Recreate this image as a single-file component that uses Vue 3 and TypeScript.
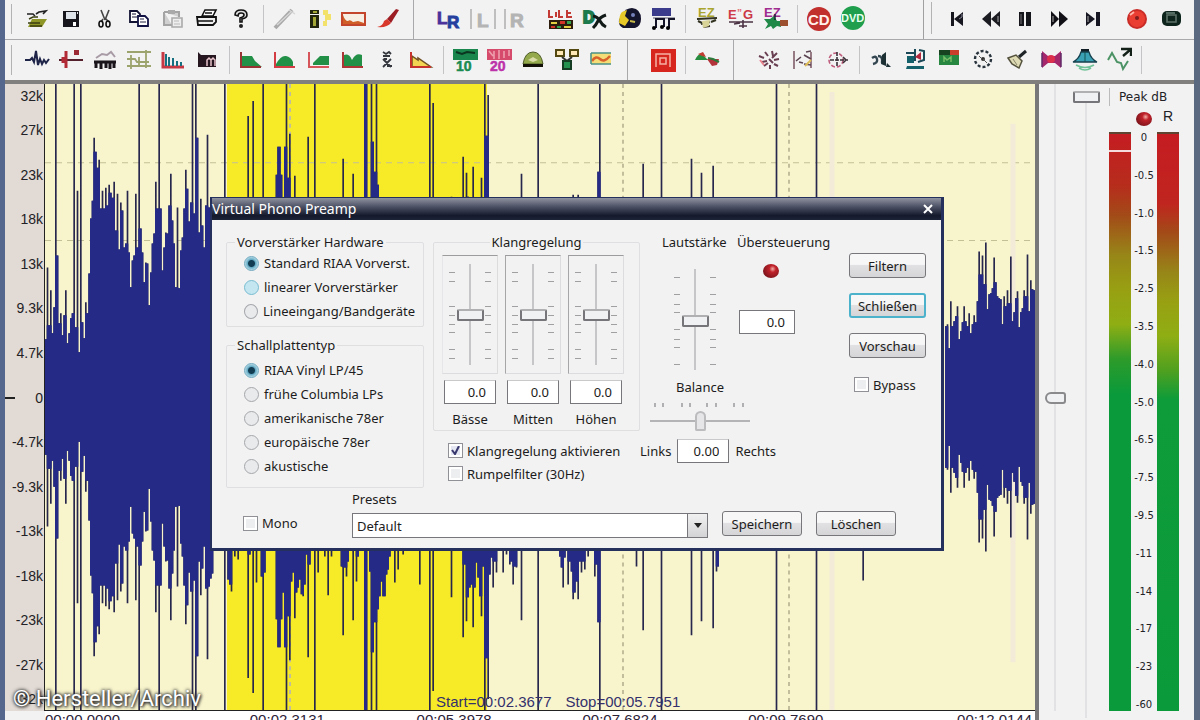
<script setup lang="ts">
import { ref } from 'vue'

type Tool = { name: string; art: string }

const sans = 'font-family="Liberation Sans, sans-serif" font-weight="bold"'

const fileTools: Tool[] = [
  { name: 'Öffnen', art: '<path d="M3 8h6l2 2M12 8l3-2 7-1-3 3" fill="none" stroke="#222" stroke-width="1.6"/><path d="M8 13h15l-5 8H4z" fill="#8f9628"/><path d="M5 13l4-2h5M4 17h12M6 20h12" fill="none" stroke="#3b3f10" stroke-width="1.4"/>' },
  { name: 'Sichern', art: '<path d="M5 5h16v16H5z" fill="#16161c"/><path d="M8 6h10v7H8z" fill="#dfe3ea"/><path d="M15 16h3v4h-3z" fill="#fff"/><path d="M19 6h1v2h-1z" fill="#ddd"/>' },
  { name: 'Ausschneiden', art: '<path d="M9 4l4 10M17 4l-4 10M11 13l-2 3M14 13l3 3" stroke="#444" stroke-width="1.6"/><ellipse cx="9" cy="18" rx="2" ry="3" fill="none" stroke="#111" stroke-width="1.6"/><ellipse cx="16" cy="18" rx="2" ry="3" fill="none" stroke="#111" stroke-width="1.6"/>' },
  { name: 'Kopieren', art: '<path d="M4 5h7l3 3v8H4z" fill="#fff" stroke="#111133" stroke-width="1.8"/><path d="M6 8h4M6 11h6" stroke="#113"/><path d="M12 10h7l3 3v7H12z" fill="#fff" stroke="#111144" stroke-width="1.8"/><path d="M14 13h4M14 16h6" stroke="#224"/>' },
  { name: 'Einfügen', art: '<path d="M4 6h15v5M4 6v13h8" fill="#d0d0d0" stroke="#a4a4a4" stroke-width="2"/><path d="M8 4h7v4H8z" fill="#aaa"/><path d="M12 12h10v9H12z" fill="#eee" stroke="#aaa" stroke-width="1.6"/><path d="M14 15h5M14 18h6" stroke="#bbb"/>' },
  { name: 'Drucken', art: '<path d="M8 10l3-6h11l-3 6z" fill="#fff" stroke="#111" stroke-width="1.6"/><path d="M3 11h19v5l-3 3H4z" fill="#eee" stroke="#111" stroke-width="1.8"/><path d="M4 15h15M11 7h7" stroke="#111" stroke-width="1.4"/>' },
  { name: 'Hilfe', art: '<path d="M7 9q0-5 6-5t6 5q0 3-5 4v3h-2v-4q4-1 4-3t-3-2-3 3z" fill="#ddd" stroke="#111" stroke-width="1.6"/><circle cx="13" cy="20" r="2" fill="#222"/>' }
]
const editTools: Tool[] = [
  { name: 'Stift', art: '<path d="M3 22L20 4" stroke="#a9a9a9" stroke-width="4"/><path d="M5 19L19 6M17 4l6 4" stroke="#d6d6d6" stroke-width="1.5"/>' },
  { name: 'Pegelanzeige', art: '<path d="M4 4h9v4H4zM4 9h9v13H4z" fill="#22260e"/><path d="M7 5h4v2H7zM7 11h3v9H7z" fill="#a4a836"/><path d="M17 4h5v4h3v6h-4v6h-4v-5h2V9h-2z" fill="#f2e26b"/>' },
  { name: 'Hüllkurve', art: '<rect x="2" y="7" width="23" height="12" fill="#f8efe4" stroke="#c2452c" stroke-width="2"/><path d="M3 18V9q2 6 5 6 2-2 5 1l5-1 6 2v1z" fill="#cf5e28"/>' },
  { name: 'Pinsel', art: '<path d="M25 4l-3-1-9 10 4 4z" fill="#9d1d24"/><path d="M13 13l4 4q-4 5-14 4 6-1 7-6z" fill="#d8382a"/>' }
]
const channelTools: Tool[] = [
  { name: 'Beide Kanäle', art: `<text x="1" y="18" font-size="17" fill="#4b2f9b" stroke="#4b2f9b" ${sans}>L</text><text x="11" y="22" font-size="17" fill="#243f9e" stroke="#243f9e" ${sans}>R</text>` },
  { name: 'Linker Kanal', art: `<path d="M1 3v20M25 3v20" stroke="#aaa" stroke-width="1.4"/><text x="7" y="21" font-size="19" fill="#b4b4b4" stroke="#b4b4b4" ${sans}>L</text>` },
  { name: 'Rechter Kanal', art: `<path d="M1 3v20" stroke="#aaa" stroke-width="1.4"/><text x="6" y="21" font-size="19" fill="#b4b4b4" stroke="#b4b4b4" ${sans}>R</text>` }
]
const pluginTools: Tool[] = [
  { name: 'Filterliste', art: '<path d="M1 4v7h4M8 6v5M11 4v7h4M19 4v7h5M19 7h4" fill="none" stroke="#c33a35" stroke-width="2"/><path d="M1 14h24v9H1z" fill="#2c1d0d"/><path d="M3 16h6v2H3zM16 20h7v2h-7z" fill="#e4cf41"/><path d="M12 15h5v3h-5zM3 20h4v2H3z" fill="#d33326"/><path d="M19 15h4v3h-4zM9 20h4v2H9z" fill="#35a34e"/>' },
  { name: 'DirectX', art: `<text x="1" y="17" font-size="16" fill="#1d7a4c" stroke="#1d7a4c" stroke-width="2" ${sans}>D</text><path d="M11 10q5 1 7 5t6 6M24 9q-6 2-8 6t-5 7" fill="none" stroke="#111a16" stroke-width="3"/>` },
  { name: 'VST', art: '<path d="M6 8q4-6 10-6 9 1 9 11 0 7-6 9H7q-5-3-4-8z" fill="#15142d"/><path d="M6 6l5-2-2 6 4 4-4 6-6-3q0-8 3-11z" fill="#e8c92a"/><circle cx="17" cy="9" r="2" fill="#7480b9"/><path d="M14 15l5 1" stroke="#c7b948" stroke-width="2"/>' },
  { name: 'Medien', art: '<path d="M2 2h19v8H2z" fill="#3b3d8c"/><path d="M3 12h22" stroke="#889" stroke-width="1.5"/><path d="M6 22v-9h8v8M19 22v-9h6" fill="none" stroke="#151529" stroke-width="2"/><circle cx="4" cy="22" r="2"/><circle cx="12" cy="21" r="2"/><circle cx="18" cy="22" r="2"/>' }
]
const easyTools: Tool[] = [
  { name: 'EZ Clean', art: `<text x="4" y="11" font-size="13" fill="#aaa52f" ${sans}>EZ</text><path d="M3 13l20-1M4 15l4 2M17 16l5-2M7 18l9-2M9 21l7-1" stroke="#332" stroke-width="2"/><path d="M8 15l8-1-1 6-6 2z" fill="#d8d397"/>` },
  { name: 'EZ Forensik', art: `<text x="0" y="13" font-size="13" fill="#d03c48" ${sans}>E</text><text x="9" y="11" font-size="10" fill="#e2737a" ${sans}>”</text><text x="15" y="13" font-size="13" fill="#cb3744" ${sans}>G</text><path d="M1 16h24M6 18l6-1M11 20h8M15 14v8" stroke="#4b3344" stroke-width="1.6"/>` },
  { name: 'EZ Enhance', art: `<text x="2" y="11" font-size="13" fill="#a02c8f" ${sans}>EZ</text><path d="M2 13h6l4-3 3 5h4v6l-4-1-4 3-2-3-6 3 3-5z" fill="#218948"/><path d="M18 14h8v6h-8z" fill="#9c5030"/><path d="M13 8v6" stroke="#123" stroke-width="1.4"/>` }
]
const burnTools: Tool[] = [
  { name: 'CD brennen', art: `<circle cx="13" cy="13" r="12" fill="#c2302d"/><text x="2" y="19" font-size="15" fill="#fff0ec" ${sans}>CD</text>` },
  { name: 'DVD brennen', art: `<circle cx="13" cy="12" r="12" fill="#1f9f4d"/><text x="1" y="16" font-size="11" fill="#e9fff0" ${sans}>DVD</text>` }
]
const playTools: Tool[] = [
  { name: 'Zum Anfang', art: '<path d="M7 6h3v14H7zM19 6v14l-9-7z" fill="#171720"/><path d="M18 8v3l-3 2" stroke="#889" fill="none"/>' },
  { name: 'Zurück', art: '<path d="M13 5v16l-9-8zM22 5v16l-9-8z" fill="#1b1b22"/><path d="M20 10v6" stroke="#aaa"/>' },
  { name: 'Pause', art: '<path d="M7 6h5v14H7zM14 6h5v14h-5z" fill="#15151c"/><path d="M9 8v10" stroke="#777"/>' },
  { name: 'Vor', art: '<path d="M5 5v16l8-8zM13 5v16l9-8z" fill="#101016"/><path d="M7 10v6" stroke="#aaa"/>' },
  { name: 'Zum Ende', art: '<path d="M6 6v14l9-7zM16 6h4v14h-4z" fill="#171723"/><path d="M8 10v6" stroke="#aaa"/>' }
]
const recordTools: Tool[] = [
  { name: 'Aufnahme', art: '<circle cx="13" cy="13" r="10" fill="#c92c27"/><circle cx="13" cy="13" r="8" fill="#ea3e33"/><circle cx="13" cy="12" r="2" fill="#7d1d1d"/><path d="M6 9l4-3" stroke="#ffb6a8" stroke-width="2"/>' },
  { name: 'Stopp', art: '<rect x="4" y="5" width="19" height="15" rx="5" fill="#0c241c"/><path d="M9 9h9v7H9z" fill="none" stroke="#5d7168" stroke-width="1.6"/><path d="M8 7h9" stroke="#9ab3a8"/>' }
]

const axes = (color: string) => `<path d="M3 5v15h20" fill="none" stroke="${color}" stroke-width="2"/>`
const restoreTools: Tool[] = [
  { name: 'Klickfilter', art: '<path d="M1 13h5l2-2 2 4 2-11 2 14 2-6 2 5 2-4 2 3 3-4" fill="none" stroke="#1e2448" stroke-width="2"/>' },
  { name: 'Klick entfernen', art: '<path d="M1 13h24" stroke="#54202c" stroke-width="2"/><path d="M8 4v17M5 10v6" stroke="#b12a35" stroke-width="3"/><path d="M16 3h5v5h-5z" fill="#9c2a35"/>' },
  { name: 'Rauschfilter', art: '<path d="M4 11l6-4 5 1 4-3 4 5" fill="none" stroke="#a99ba5" stroke-width="2"/><path d="M2 15h22M4 21v-5M9 22v-6M14 21v-5M18 22v-6M22 21v-5" stroke="#19151b" stroke-width="3"/>' },
  { name: 'Brummfilter', art: '<path d="M1 5h24M5 8v14M13 10v10M20 3v18M1 12h8l2 3h12M1 19h24" fill="none" stroke="#9da36d" stroke-width="1.8"/>' },
  { name: 'Spektrumfilter', art: '<path d="M3 5v15h21" fill="none" stroke="#c63944" stroke-width="3"/><path d="M6 19V7M9 19V10M13 19V11M17 19V14M21 19v-4" stroke="#167080" stroke-width="2"/>' },
  { name: 'Kontinuierlich', art: '<path d="M4 5l3 3h15v12H4z" fill="#251620"/><path d="M13 19v-6l2-2 2 2v6M17 13l2-2 2 2v6" fill="none" stroke="#e7c4cc" stroke-width="1.5"/>' }
]
const filterTools: Tool[] = [
  { name: 'Tiefpass', art: '<path d="M4 9h10l3 5 7 6H4z" fill="#239048"/>' + axes('#993333') },
  { name: 'Bandpass', art: '<path d="M4 17q5-9 10-8t7 6v5H4z" fill="#239048"/>' + axes('#d23c42') },
  { name: 'Hochpass', art: '<path d="M7 16l7-7h9v9H7z" fill="#239048"/>' + axes('#d5555a') },
  { name: 'Kerbfilter', art: '<path d="M4 8q5-2 8 5 4-8 10-5v12H4z" fill="#239048"/>' + axes('#ad3535') },
  { name: 'Median', art: '<path d="M9 5l3 2 3-2 2 2M9 9h7M9 12l8 8M17 12l-8 8M10 12h3M13 19h5" stroke="#33363d" stroke-width="1.8" fill="none"/>' },
  { name: 'Equalizer', art: '<path d="M4 9l6 4v-2l13 9H4z" fill="#f2d553" stroke="#6f5023" stroke-width="1.5"/>' + axes('#c8322c') }
]
const eqTools: Tool[] = [
  { name: '10-Band Equalizer', art: `<path d="M1 2h25v11H1z" fill="#19874d"/><path d="M4 5l6 2 5-2 8 1" stroke="#0b3520" stroke-width="2" fill="none"/><text x="4" y="24" font-size="14" fill="#1a8b50" stroke="#1a8b50" stroke-width=".5" ${sans}>10</text>` },
  { name: '20-Band Equalizer', art: `<path d="M1 2h25v11H1z" fill="#d64b6c"/><path d="M3 4l4 5M8 4v8M13 3v9M18 4v7M23 3v6" stroke="#ee9fae" stroke-width="1.6"/><text x="4" y="24" font-size="14" fill="#bd33a9" stroke="#bd33a9" stroke-width=".5" ${sans}>20</text>` },
  { name: 'Dynamik', art: '<path d="M3 17q2-12 10-12t10 12z" fill="#93a94c" stroke="#4f5d27"/><path d="M8 13l5-3 5 3-5 2z" fill="#dadca7"/><path d="M3 17h20v3H3z" fill="#131008"/>' },
  { name: 'Kette', art: '<path d="M2 3h8v6H2zM16 3h8v6h-8z" fill="#ffe8b5" stroke="#544811" stroke-width="2"/><path d="M8 10l5 4 5-4" fill="none" stroke="#333" stroke-width="2"/><path d="M9 14h8v8H9z" fill="#22924e" stroke="#143d24" stroke-width="2"/>' },
  { name: 'Verlauf', art: '<path d="M3 6h20v11H3z" fill="#f4dd77"/><path d="M4 14q4-6 8-2t10-3" fill="none" stroke="#d8622b" stroke-width="2.5"/><path d="M3 6h20M3 17h20M3 6v11" stroke="#4b9188" stroke-width="1.6"/>' }
]
const stopTool: Tool[] = [
  { name: 'Bypass', art: '<rect x="1" y="2" width="25" height="23" fill="#d6261d"/><path d="M6 20V7h14v13M10 17v-6h6v6z" fill="none" stroke="#f6b0a2" stroke-width="1.5"/>' }
]
const morphTool: Tool[] = [
  { name: 'Überblenden', art: '<path d="M1 13q5-10 10-3l3 3H1z" fill="#278c3e"/><path d="M4 7l5-2 3 5-4-1z" fill="#c23c31"/><path d="M13 12h12l-2 6-5 1z" fill="#b3343a"/><path d="M14 11l5 1 6 3" stroke="#2c7c3c" stroke-width="2"/>' }
]
const sparkTools: Tool[] = [
  { name: 'Knistern', art: '<path d="M3 9l5 2M9 5l3 4M16 4l1 5M21 6l-5 5M23 12l-5 1M6 15l5-1M13 12l4 4M18 17l4 2M8 19l4-3M14 18v4" stroke="#683e50" stroke-width="2"/><path d="M4 13l4 5" stroke="#e8828c" stroke-width="2"/>' },
  { name: 'Ausrichten', art: '<path d="M4 4v18M21 5v16" stroke="#967b84" stroke-width="2"/><path d="M6 14l5-4M14 8l7 4M14 17l7 1M9 15l4 1M16 5l5-1" stroke="#5c4452" stroke-width="1.6"/><path d="M15 19l6-6" stroke="#ddbb57" stroke-width="2"/>' },
  { name: 'Zielen', art: '<circle cx="12" cy="13" r="7" fill="none" stroke="#c05d7c" stroke-width="1.6" stroke-dasharray="4 2"/><path d="M13 5v15M6 13h18M19 10l3 3-3 3" fill="none" stroke="#3a3037" stroke-width="1.6" stroke-dasharray="4 1"/>' }
]
const effectTools: Tool[] = [
  { name: 'Echo', art: '<path d="M4 11q4-3 5 1t-4 5M10 9q5 0 4 7" fill="none" stroke="#344751" stroke-width="2.4"/><path d="M14 8l4-3v14l-5-2zM19 16l4 4h-5z" fill="#1d3135"/>' },
  { name: 'Hall', art: '<path d="M4 6h10M13 2v12M17 3l5 1v9l-6 2" fill="none" stroke="#1b4958" stroke-width="2"/><path d="M5 9h7v7H5zM5 19h17v3H4z" fill="#15616b"/><path d="M13 10l6-5v8z" fill="#b4283d"/>' },
  { name: 'Pegel', art: '<path d="M3 3h20v15H3z" fill="#278741"/><path d="M3 3h11v5H3z" fill="#184321"/><path d="M14 3h9v5h-9z" fill="#c93d2b"/><path d="M8 15v-5l3 3 4-3v5" fill="none" stroke="#75bd67" stroke-width="1.5"/>' },
  { name: 'Tempo', art: '<circle cx="13" cy="12" r="8" fill="none" stroke="#29343d" stroke-width="2.4" stroke-dasharray="3 2"/><circle cx="13" cy="12" r="2" fill="#333"/><path d="M13 12l4 4M9 9l2 2" stroke="#555"/>' },
  { name: 'Besen', art: '<path d="M22 4l-7 6" stroke="#1f2427" stroke-width="3"/><path d="M4 11l8-3 6 6-3 7-7-4z" fill="#dedbb4" stroke="#55533e" stroke-width="1.5"/><path d="M9 12l4 6" stroke="#88856b"/>' },
  { name: 'Stereo', art: '<path d="M4 4l6 5h7l6-5v17l-6-5h-7l-6 5z" fill="#a4276c"/><circle cx="13" cy="12" r="4" fill="#dc304c"/><path d="M4 6v14M23 6v14" stroke="#622b68" stroke-width="1.5"/>' },
  { name: 'Glocke', art: '<path d="M9 2h8v4H9z" fill="#101d24"/><path d="M1 15q6-3 8-10h8q2 7 8 10z" fill="#3aa0b4" stroke="#17414d" stroke-width="1.3"/><path d="M13 5v10" stroke="#155"/><path d="M4 18q9 5 18 0M7 21q6 4 12 0" fill="none" stroke="#73c39a" stroke-width="1.6"/>' },
  { name: 'Resampling', art: '<path d="M2 13l4-7 5 9 4 1 2 6 5-8" fill="none" stroke="#4b9264" stroke-width="2"/><path d="M15 2h10v7M24 3l-7 6" fill="none" stroke="#132018" stroke-width="2.4"/>' }
]

/* Peak amplitudes measured from the centre line; full scale is 314. */
const FULL = 320
const HALF = 314
const STEP = 5 / 3
const intro = [
  58, 130, 72, 107, 64, 90, FULL, 142, 74, 84, 62, 82, 107, 54, 64, 79, 84, FULL, 70, 207, 45, FULL, 75, 59, 95, 84,
  124, 179, 197, 260, 246, 230, 238, 189, 207, 189, 210, 192, 213, 205, 200, 216, 167, 204, 148, 195, 187, 150, 154,
  207, 145, 110, 137, 142, 204, 150, FULL, 169, 145, 115, 135, 134, 92, 125, 154, 164, 216, 189, FULL, 189, 127, 150,
  165, 164, 192, 224, 177, 154, 110, 190, 109, 147, 160, 189, 228, 209, 176, 195, FULL, 184, FULL, 260, 165, 199, 172,
  150, 192, 263, 190, 182, 177
]
const outro = [
  71, 73, 49, 96, 71, 76, 81, 91, 58, 66, 75, 91, 76, 71, 84, 64, 73, 82, 75, 96, 146, 123, 142, 113, 155, 88, 103,
  104, 109, 140, 115, 101, 99, 98, 73, 101, 91, 107, 94, 141, 76, 85, 99, 106, 70, 85, 89, 107, 101, 143, 86, 117, 108, 107
]
/* [slot, amplitude] for the sparse passage between both loud parts */
const middle: [number, number][] = [
  [3, FULL], [5, 183], [6, 188], [7, 195], [9, 160], [11, 163], [17, 282], [18, 158], [20, 297], [22, 186], [25, 180],
  [26, FULL], [27, 176], [34, 223], [35, 251], [36, 251], [37, 223], [38, 196], [39, 251], [40, FULL], [41, 220],
  [42, 264], [43, 185], [44, 176], [45, 222], [46, 196], [47, 191], [48, 183], [49, 198], [50, 200], [51, 188],
  [52, 158], [53, 261], [54, 168], [57, FULL], [59, 176], [63, 160], [65, 199], [67, 160], [73, 170], [74, 239],
  [75, 171], [76, 180], [77, 165], [80, 224], [82, 185], [83, 160], [87, FULL], [88, FULL], [90, 175], [91, FULL],
  [92, 256], [93, 226], [94, FULL], [95, 213], [96, 200], [97, 185], [98, 200], [99, 200], [100, 178], [101, 173],
  [102, 160], [105, 186], [107, 173], [110, 158], [120, 188], [126, FULL], [128, 295], [139, 201], [146, 241],
  [147, 168], [148, 225], [149, 201], [150, 191], [151, 188], [152, 231], [153, 191], [154, 166], [155, 181],
  [156, 200], [157, 220], [158, 170], [159, FULL], [160, 262], [161, 303], [162, 178], [163, 161], [164, 191],
  [165, 165], [166, 176], [170, 176], [172, 158], [174, 168], [175, 165], [176, 188], [177, 170], [178, 171],
  [181, 224], [191, FULL], [204, 160], [205, 171], [206, 191], [207, 161], [209, 188], [210, 165], [211, 175],
  [212, 203], [213, 196], [214, 185], [215, 203], [216, 165], [217, 176], [218, 165], [219, 173], [221, 160],
  [225, 180], [226, 168], [227, 226], [228, FULL], [250, 170], [254, 234], [265, FULL], [283, 239], [289, 225],
  [296, 232], [298, 175], [299, 170], [334, FULL], [358, FULL], [386, 184]
]

function slots(list: [number, number][], count: number): number[] {
  const out: number[] = new Array(count).fill(0)
  list.forEach(([slot, amp]) => { out[slot] = amp })
  return out
}
function bars(amps: number[], start: number): string {
  return amps
    .map((amp, i) => (amp ? `M${(start + i * STEP).toFixed(2)} ${HALF - amp}h${STEP.toFixed(2)}v${amp * 2}h-${STEP.toFixed(2)}z` : ''))
    .join('')
}
/* The solid body stops where a peak rises above both of its neighbours. */
function body(amps: number[]): number[] {
  return amps.map((amp, i) => Math.min(amp, Math.max(amps[i - 1] ?? 0, amps[i + 1] ?? 0)))
}
const middleAmps = slots(middle, 388)
const peakPath = bars(intro, 0) + bars(middleAmps, 174) + bars(outro, 900)
const bodyPath = bars(body(intro), 0) + bars(body(middleAmps), 174) + bars(body(outro), 900)

const scale = ['32k', '27k', '23k', '18k', '13k', '9.3k', '4.7k', '0', '-4.7k', '-9.3k', '-13k', '-18k', '-23k', '-27k', '-32k']
const times = ['00:00.0000', '00:02.3131', '00:05.3978', '00:07.6824', '00:09.7690', '00:12.0144']
const decibels = ['0', '-0.5', '-1.0', '-1.5', '-2.5', '-3.5', '-4.0', '-5.0', '-6.5', '-7.5', '-9.5', '-11', '-14', '-17', '-23', '-60']
const toneTicks = [8, 17, 42, 51, 60, 68, 85, 94]
const volumeTicks = [8, 25, 35, 43, 60, 70, 78, 95]
const panTicks = [4, 12, 31, 39, 56, 65, 83, 92]
const ticks = (list: number[]) => list.map((y) => `M0 ${y}h6v1h-6z`).join('')
const panPath = panTicks.map((x) => `M${x} 0h2v4h-2z`).join('')

const hardware = ['Standard RIAA Vorverst.', 'linearer Vorverstärker', 'Lineeingang/Bandgeräte']
const records = ['RIAA Vinyl LP/45', 'frühe Columbia LPs', 'amerikanische 78er', 'europäische 78er', 'akustische']
const chosenHardware = ref(hardware[0])
const chosenRecord = ref(records[0])
const tones = ref([
  { name: 'Bässe', level: 50, value: '0.0' },
  { name: 'Mitten', level: 50, value: '0.0' },
  { name: 'Höhen', level: 50, value: '0.0' }
])
const toneActive = ref(true)
const rumble = ref(false)
const bypass = ref(false)
const mono = ref(false)

const fileRow = [
  { tools: fileTools, gap: 'line' },
  { tools: editTools, gap: 'wide' },
  { tools: channelTools, gap: 'none' },
  { tools: pluginTools, gap: 'line' },
  { tools: easyTools, gap: 'line' },
  { tools: burnTools, gap: 'dock' },
  { tools: playTools, gap: 'none' },
  { tools: recordTools, gap: '' }
]
const effectRow = [
  { tools: restoreTools, gap: 'line' },
  { tools: filterTools, gap: 'line' },
  { tools: eqTools, gap: 'wide' },
  { tools: stopTool, gap: 'line' },
  { tools: morphTool, gap: 'wide' },
  { tools: sparkTools, gap: 'line' },
  { tools: effectTools, gap: 'line' }
]
</script>

<template>
  <main class="app">
    <header class="bars">
      <div v-for="(row, r) in [fileRow, effectRow]" :key="r" class="toolbar" role="toolbar">
        <span class="grip"></span>
        <template v-for="(group, g) in row" :key="g">
          <div class="group">
            <button v-for="tool in group.tools" :key="tool.name" class="tool" type="button" :aria-label="tool.name">
              <svg viewBox="0 0 26 26" width="26" height="26" v-html="tool.art"></svg>
            </button>
          </div>
          <span v-if="group.gap" class="gap" :class="group.gap"></span>
        </template>
      </div>
    </header>

    <div class="stage">
      <div class="scale">
        <span v-for="mark in scale" :key="mark" :class="{ zero: mark === '0' }">{{ mark }}</span>
      </div>

      <section class="wave">
        <div class="plot">
          <svg class="trace" viewBox="0 0 990 628" preserveAspectRatio="none" aria-hidden="true">
            <rect width="990" height="628" fill="#f8f5cd" />
            <rect x="182" width="260" height="628" fill="#f7ea26" />
            <path d="M0 79H990M0 157H990" stroke="#c4c096" stroke-dasharray="6 5" />
            <path d="M245 0V628M578 0V628M744 0V628" stroke="#c2be9c" stroke-width="2" stroke-dasharray="4 4" />
            <path d="M787 8V628M968 40V580" stroke="#f3ebd8" stroke-width="5" />
            <path :d="peakPath" fill="#27264c" />
            <path :d="bodyPath" fill="#242a86" />
          </svg>
          <p class="range"><span>Start=00:02.3677</span><span>Stop=00:05.7951</span></p>
        </div>
        <div class="timeline"><span v-for="t in times" :key="t">{{ t }}</span></div>
      </section>

      <aside class="monitor">
        <input class="fader zoomer" type="range" value="50" aria-label="Vertikaler Zoom" />
        <input class="fader gain" type="range" value="100" aria-label="Ausgangspegel" />
        <div class="peaks">
          <p class="peak-title">Peak dB</p>
          <div class="peak-lamps"><span></span><i class="led"></i><b>R</b></div>
          <div class="meters">
            <div class="meter held"></div>
            <div class="decibels"><span v-for="d in decibels" :key="d">{{ d }}</span></div>
            <div class="meter"></div>
          </div>
        </div>
      </aside>

      <form class="dialog" role="dialog" aria-label="Virtual Phono Preamp" @submit.prevent>
        <div class="title">
          <span>Virtual Phono Preamp</span>
          <button type="button" class="close" aria-label="Fenster schließen">
            <svg viewBox="0 0 10 10" width="10" height="10"><path d="M1 1l8 8M9 1L1 9" stroke="#fff" stroke-width="2" /></svg>
          </button>
        </div>

        <div class="content">
          <div class="settings">
            <div class="choices">
              <fieldset class="hardware">
                <legend>Vorverstärker Hardware</legend>
                <label v-for="(item, i) in hardware" :key="item" class="option" :class="{ hot: i === 1 }">
                  <input v-model="chosenHardware" type="radio" name="hardware" :value="item" />{{ item }}
                </label>
              </fieldset>
              <fieldset class="records">
                <legend>Schallplattentyp</legend>
                <label v-for="item in records" :key="item" class="option">
                  <input v-model="chosenRecord" type="radio" name="record" :value="item" />{{ item }}
                </label>
              </fieldset>
            </div>

            <div class="tone">
              <fieldset>
                <legend class="centered">Klangregelung</legend>
                <div class="tone-grid">
                  <div v-for="(tone, i) in tones" :key="tone.name" class="tone-col">
                    <div class="slot">
                      <svg class="ticks" viewBox="0 0 6 101" width="6" height="101"><path :d="ticks(toneTicks)" /></svg>
                      <input v-model="tone.level" class="fader" type="range" :aria-label="tone.name" />
                      <svg class="ticks" viewBox="0 0 6 101" width="6" height="101"><path :d="ticks(toneTicks)" /></svg>
                    </div>
                    <input :id="'tone' + i" v-model="tone.value" class="number" type="text" />
                    <label :for="'tone' + i">{{ tone.name }}</label>
                  </div>
                </div>
              </fieldset>
              <label class="check"><input v-model="toneActive" type="checkbox" />Klangregelung aktivieren</label>
              <label class="check"><input v-model="rumble" type="checkbox" />Rumpelfilter (30Hz)</label>
            </div>

            <div class="output">
              <div class="levels">
                <div class="volume">
                  <label for="volume">Lautstärke</label>
                  <div class="slot plain">
                    <svg class="ticks" viewBox="0 0 6 101" width="6" height="101"><path :d="ticks(volumeTicks)" /></svg>
                    <input id="volume" class="fader" type="range" value="48" />
                    <svg class="ticks" viewBox="0 0 6 101" width="6" height="101"><path :d="ticks(volumeTicks)" /></svg>
                  </div>
                </div>
                <div class="clip">
                  <label for="clip">Übersteuerung</label>
                  <i class="led"></i>
                  <input id="clip" class="number" type="text" value="0.0" />
                </div>
              </div>
              <div class="balance">
                <label for="balance">Balance</label>
                <svg class="dots" viewBox="0 0 100 4" width="100" height="4"><path :d="panPath" /></svg>
                <input id="balance" class="pan" type="range" value="50" />
              </div>
              <div class="sides">
                <label for="side">Links</label>
                <input id="side" class="number" type="text" value="0.00" />
                <span>Rechts</span>
              </div>
            </div>

            <div class="actions">
              <button type="button">Filtern</button>
              <button type="button" class="focused">Schließen</button>
              <button type="button">Vorschau</button>
              <label class="check"><input v-model="bypass" type="checkbox" />Bypass</label>
            </div>
          </div>

          <div class="footer">
            <label class="check"><input v-model="mono" type="checkbox" />Mono</label>
            <div class="presets">
              <label for="preset">Presets</label>
              <div class="select">
                <select id="preset"><option>Default</option></select>
                <span class="arrow"><svg viewBox="0 0 8 5" width="8" height="5"><path d="M0 0h8L4 5z" fill="#222" /></svg></span>
              </div>
            </div>
            <button type="button">Speichern</button>
            <button type="button">Löschen</button>
          </div>
        </div>
      </form>
    </div>

    <p class="credit">© Hersteller/Archiv</p>
  </main>
</template>

<style>
body { margin: 0; background: #f2f2f3; }
</style>

<style scoped>
* { box-sizing: border-box; }
p { margin: 0; }
button, input, select { font: inherit; color: inherit; margin: 0; }
.app {
  position: relative;
  display: flex;
  flex-direction: column;
  height: 100vh;
  overflow: hidden;
  border-left: 5px solid #56678d;
  border-right: 6px solid #5a6880;
  background: #f2f2f3;
  font: 14px "Liberation Sans", sans-serif;
  color: #222226;
}
.bars { flex: none; border-bottom: 4px solid #82807e; }
.toolbar { display: flex; align-items: center; height: 40px; padding-bottom: 2px; border-bottom: 1px solid #a9a9ab; overflow: hidden; }
.toolbar + .toolbar { padding-bottom: 0; border-bottom: 0; }
.grip { flex: none; width: 7px; height: 30px; margin-right: 8px; border-right: 1px solid #b3b3b5; }
.group { display: flex; flex: none; }
.tool { display: grid; place-items: center; width: 34px; height: 34px; padding: 0; border: 0; background: none; }
.gap { flex: none; width: 10px; height: 28px; }
.gap.line { background: linear-gradient(#c4c4c6, #c4c4c6) 5px 0 / 1px 100% no-repeat; }
.gap.wide { width: 28px; height: 40px; background: linear-gradient(#a9a9ab, #a9a9ab) 9px 0 / 1px 100% no-repeat; }
.gap.dock { width: 70px; height: 40px; background: linear-gradient(#a0a0a2, #a0a0a2) 53px 0 / 1px 100% no-repeat, linear-gradient(#b3b3b5, #b3b3b5) 61px 3px / 1px 32px no-repeat; }

.stage { position: relative; flex: 1; display: flex; min-height: 0; }
.scale { display: flex; flex-direction: column; flex: none; width: 40px; margin-bottom: 9px; padding-right: 1px; background: #e2dad4; border-right: 1px solid #222; }
.scale span { display: flex; flex: 45 1 0; align-items: center; justify-content: flex-end; min-height: 0; line-height: 16px; }
.scale span:first-child, .scale span:last-child { flex-grow: 24; }
.scale .zero { background: linear-gradient(#222, #222) 0 50% / 10px 2px no-repeat; }
.wave { display: flex; flex: 1; flex-direction: column; min-width: 0; }
.plot { position: relative; flex: 1; min-height: 0; border-bottom: 1px solid #222; }
.trace { display: block; width: 100%; height: 100%; }
.range { position: absolute; left: 39.5%; bottom: 0; display: flex; gap: 14px; font-size: 15px; line-height: 17px; color: #34306c; white-space: nowrap; }
.timeline { display: grid; flex: none; grid-template-columns: 205fr 167fr 166fr 166fr 209fr 78fr; height: 9px; overflow: hidden; font-size: 15px; line-height: 17px; white-space: nowrap; color: #2c2238; background: #fff; }

.monitor { display: flex; flex: none; width: 159px; padding-left: 5px; border-left: 4px solid #77777a; }
.monitor .fader { height: calc(100% - 9px); }
.peaks { display: flex; flex: 1; flex-direction: column; margin: 0 15px 9px 9px; min-width: 0; }
.peak-title { margin-top: 4px; padding-left: 9px; border-left: 1px solid #bbb; font: 12px/18px "DejaVu Sans", sans-serif; white-space: nowrap; }
.peak-lamps { display: grid; grid-template-columns: 22px 1fr 22px; place-items: center; height: 26px; }
.peak-lamps b { font-weight: 400; margin-bottom: 6px; }
.meters { display: grid; flex: 1; grid-template-columns: 22px 1fr 22px; min-height: 0; }
.meter { border-top: 2px solid #5f4432; background: linear-gradient(#c51c22 0, #c0251f 12%, #a34a18 17%, #978618 24%, #98a012 29%, #8fae14 35%, #4fa01f 41%, #0e9c3a 46%, #0b9a3b 100%); }
.meter.held { background: linear-gradient(#f4dada, #f4dada) 0 16px / 100% 2px no-repeat, linear-gradient(#c51c22 0, #b62d1c 9%, #a34a18 14%, #978618 21%, #98a012 27%, #8fae14 33%, #2d9b2a 39%, #0b9a3b 45%, #0b9a3b 100%); }
.decibels { display: flex; flex-direction: column; justify-content: space-between; text-align: center; font: 10px/12px "DejaVu Sans", sans-serif; min-height: 0; }
.led { display: block; width: 16px; height: 14px; border-radius: 50%; background: radial-gradient(circle at 60% 35%, #f2b0a8 0, #c0222a 25%, #7d141c 75%); }

.dialog { position: absolute; left: 205px; top: 113px; border: 1px solid #26305c; border-width: 1px 3px 3px 2px; background: #f2f2f3; font: 13px/16px "Noto Sans", "DejaVu Sans", sans-serif; color: #1c1c20; white-space: nowrap; }
.title { display: flex; align-items: center; justify-content: space-between; height: 22px; padding-right: 6px; color: #fff; font-size: 14px; background: linear-gradient(#8f93a0, #4b5064 40%, #14192b 80%, #1d2338); }
.close { display: grid; place-items: center; width: 14px; height: 14px; padding: 0; border: 0; background: none; }
.content { padding: 14px 15px 10px 14px; }
.settings { display: flex; align-items: flex-start; }
fieldset { min-width: 0; margin: 0; padding: 0 8px; border: 1px solid #dfdfe1; border-radius: 2px; }
legend { padding: 0 2px; line-height: 16px; }
.choices { display: grid; gap: 10px; width: 198px; margin-right: 9px; }
.hardware { padding: 1px 8px 3px 17px; }
.records { padding: 5px 8px 9px 17px; }
.choices legend { margin-left: -9px; }
.option { display: flex; align-items: center; gap: 5px; height: 24px; }
.option input { appearance: none; width: 15px; height: 15px; border: 1px solid #a4a7ab; border-radius: 50%; background: #e9eaec; }
.option input:checked { border-color: #6fa9bf; background: radial-gradient(circle, #123c52 0 3px, #62aac4 4px, #c3e2ec 7px); }
.option.hot input { border-color: #79bcd0; background: #c3e6f0; }
.tone { width: 207px; }
.centered { margin: 0 auto; }
.tone-grid { display: grid; grid-template-columns: repeat(3, 56px); gap: 7px; padding: 5px 0 3px; }
.tone-col { display: grid; justify-items: center; }
.slot { display: flex; justify-content: center; gap: 1px; width: 56px; height: 119px; padding: 8px 0; border: 1px solid #dcdcde; border-top-color: #9c9c9f; border-left-color: #a6a6a9; margin-bottom: 6px; }
.tone-col:first-child .slot { border-left-color: #e6e6e8; }
.slot.plain { border-color: transparent; margin: 0; gap: 1px; width: 66px; }
.ticks { flex: none; fill: #a0a0a3; }
.fader { appearance: none; writing-mode: vertical-lr; direction: rtl; width: 28px; height: 100%; background: linear-gradient(#c6c6c9, #c6c6c9) 50% 0 / 2px 100% no-repeat; }
.fader::-webkit-slider-thumb { appearance: none; width: 27px; height: 12px; border: 2px solid #76767a; border-top-color: #b0b0b3; border-radius: 2px; background: #f0f1f3; }
.zoomer { width: 22px; margin-right: 6px; background: linear-gradient(#e2e2e4, #e2e2e4) 50% 0 / 2px 100% no-repeat; }
.zoomer::-webkit-slider-thumb { width: 21px; height: 12px; border: 2px solid #8a8a8d; border-radius: 6px 3px 3px 6px; }
.gain { background: linear-gradient(#e2e2e4, #e2e2e4) 50% 0 / 2px 100% no-repeat; }
.gain.fader { margin-top: 7px; }
.number { width: 52px; height: 24px; padding: 0 9px 0 0; border: 1px solid #77777b; border-top-color: #c9c9cc; border-radius: 0; background: #fff; text-align: right; }
.tone-col .number { margin-bottom: 7px; }
.check { display: flex; align-items: center; gap: 4px; height: 23px; }
.check input { appearance: none; width: 15px; height: 15px; border: 1px solid #8f9196; background: #eceef0; box-shadow: inset 0 0 0 2px #fff; }
.check input:checked { background: #e4e6f1 url("data:image/svg+xml,%3Csvg xmlns='http://www.w3.org/2000/svg' viewBox='0 0 13 13'%3E%3Cpath d='M3 6l3 4 4-8' fill='none' stroke='%2338386e' stroke-width='2'/%3E%3C/svg%3E"); }
.tone > .check { margin-left: 15px; }
.tone > fieldset + .check { margin-top: 8px; }
.output { width: 187px; }
.levels { display: flex; gap: 9px; padding-left: 22px; }
.volume, .clip { display: flex; flex-direction: column; }
.volume { width: 66px; }
.volume .slot { margin-top: 10px; }
.clip { width: 90px; }
.clip .led { margin: 14px 0 32px 26px; }
.clip .number { width: 56px; margin-left: 2px; border-top-color: #77777b; }
.balance { display: grid; justify-items: center; width: 120px; }
.dots { margin: 8px 0 3px; fill: #b0b0b3; }
.pan { appearance: none; width: 100px; height: 22px; background: linear-gradient(#b4b4b7, #b4b4b7) 0 50% / 100% 2px no-repeat; }
.pan::-webkit-slider-thumb { appearance: none; width: 11px; height: 20px; border: 2px solid #bcbcbf; border-radius: 6px 6px 2px 2px; background: #e6e6e8; }
.sides { display: flex; align-items: center; gap: 6px; margin-top: 7px; }
.actions { display: grid; width: 77px; margin: 19px 0 0 22px; gap: 15px; }
.actions .check { margin: 0 0 0 5px; }
.dialog button:not(.close) { height: 25px; padding: 0; border: 1px solid #77777b; border-radius: 3px; background: linear-gradient(#f7f7f8 45%, #e1e1e3 50%, #d5d5d8); }
.actions .focused { border: 2px solid #4cb2cc !important; }
.footer { display: flex; align-items: flex-end; margin: 3px 0 0 17px; }
.footer > .check { width: 109px; height: 24px; margin-bottom: 3px; }
.footer button { width: 80px; margin: 0 0 2px 14px; }
.presets { width: 356px; }
.select { position: relative; margin-top: 6px; }
select { appearance: none; display: block; width: 100%; height: 25px; padding: 0 4px; border: 1px solid #77777b; border-radius: 0; background: #fff; }
.arrow { position: absolute; inset: 1px 1px 1px auto; display: grid; place-items: center; width: 20px; border-left: 1px solid #77777b; background: linear-gradient(#f1f1f2, #d3d3d5); pointer-events: none; }
.credit { position: absolute; left: 8px; bottom: 8px; font: 22px/26px Roboto, "Liberation Sans", sans-serif; color: #fff; text-shadow: 0 0 3px #333, 1px 1px 3px #333, 0 0 4px #444; white-space: nowrap; }
</style>
